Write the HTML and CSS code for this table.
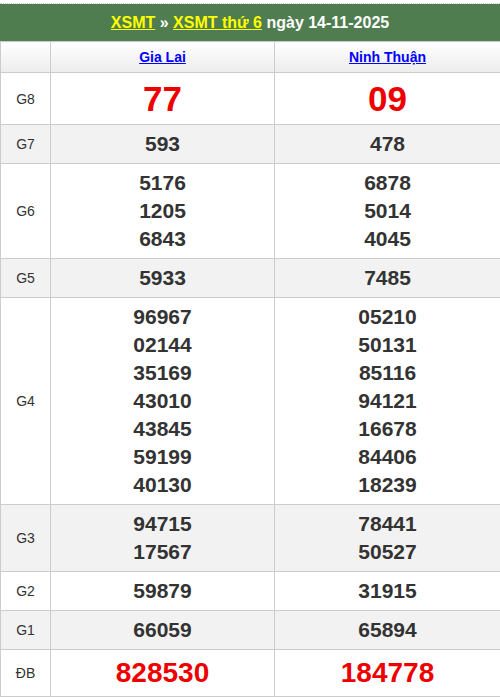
FILE: index.html
```html
<!DOCTYPE html>
<html lang="vi">
<head>
<meta charset="utf-8">
<link rel="stylesheet" href="styles.css">
</head>
<body>
<div class="box">
  <h2 class="title"><a href="#">XSMT</a> » <a href="#">XSMT thứ 6</a> ngày 14-11-2025</h2>
  <table class="kq">
    <colgroup><col class="c0"><col class="c1"><col class="c2"></colgroup>
    <thead>
      <tr><th></th><th><a href="#">Gia Lai</a></th><th><a href="#">Ninh Thuận</a></th></tr>
    </thead>
    <tbody>
      <tr><td class="lb">G8</td><td class="n g8">77</td><td class="n g8">09</td></tr>
      <tr class="alt"><td class="lb">G7</td><td class="n">593</td><td class="n">478</td></tr>
      <tr><td class="lb">G6</td><td class="n">5176<br>1205<br>6843</td><td class="n">6878<br>5014<br>4045</td></tr>
      <tr class="alt"><td class="lb">G5</td><td class="n">5933</td><td class="n">7485</td></tr>
      <tr><td class="lb">G4</td><td class="n">96967<br>02144<br>35169<br>43010<br>43845<br>59199<br>40130</td><td class="n">05210<br>50131<br>85116<br>94121<br>16678<br>84406<br>18239</td></tr>
      <tr class="alt"><td class="lb">G3</td><td class="n">94715<br>17567</td><td class="n">78441<br>50527</td></tr>
      <tr><td class="lb">G2</td><td class="n">59879</td><td class="n">31915</td></tr>
      <tr class="alt"><td class="lb">G1</td><td class="n">66059</td><td class="n">65894</td></tr>
      <tr><td class="lb">ĐB</td><td class="n db">828530</td><td class="n db">184778</td></tr>
    </tbody>
  </table>
</div>
</body>
</html>
```
FILE: styles.css
```css
html, body { margin: 0; padding: 0; background: #fff; }
body { font-family: "Liberation Sans", Arial, sans-serif; color: #333; }
.box { margin-top: 3px; border-top: 1px dotted #ccc; width: 500px; }
.title {
  margin: 0; background: #4f7d4f; color: #fff; font-size: 16px; font-weight: bold;
  text-align: center; height: 37px; line-height: 37px;
}
.title a { color: #ff0; text-decoration: underline; }
.kq { border-collapse: collapse; width: 500px; table-layout: fixed; }
.c0 { width: 50px; }
.c1 { width: 224px; }
.c2 { width: 226px; }
.kq th, .kq td { border: 1px solid #ccc; text-align: center; padding: 0; }
.kq th { height: 30px; background: linear-gradient(#fff, #ececec); font-size: 14px; font-weight: bold; }
.kq th a { color: #00f; text-decoration: underline; }
.kq tr.alt td { background: #f2f2f2; }
.lb { font-size: 14px; color: #333; }
.n { font-size: 21px; font-weight: bold; line-height: 28px; padding: 5px 0 !important; color: #333; }
.n.g8 { font-size: 35px; line-height: 41px; color: #e00; }
.n.db { font-size: 28px; line-height: 36px; color: #e00; }
```
